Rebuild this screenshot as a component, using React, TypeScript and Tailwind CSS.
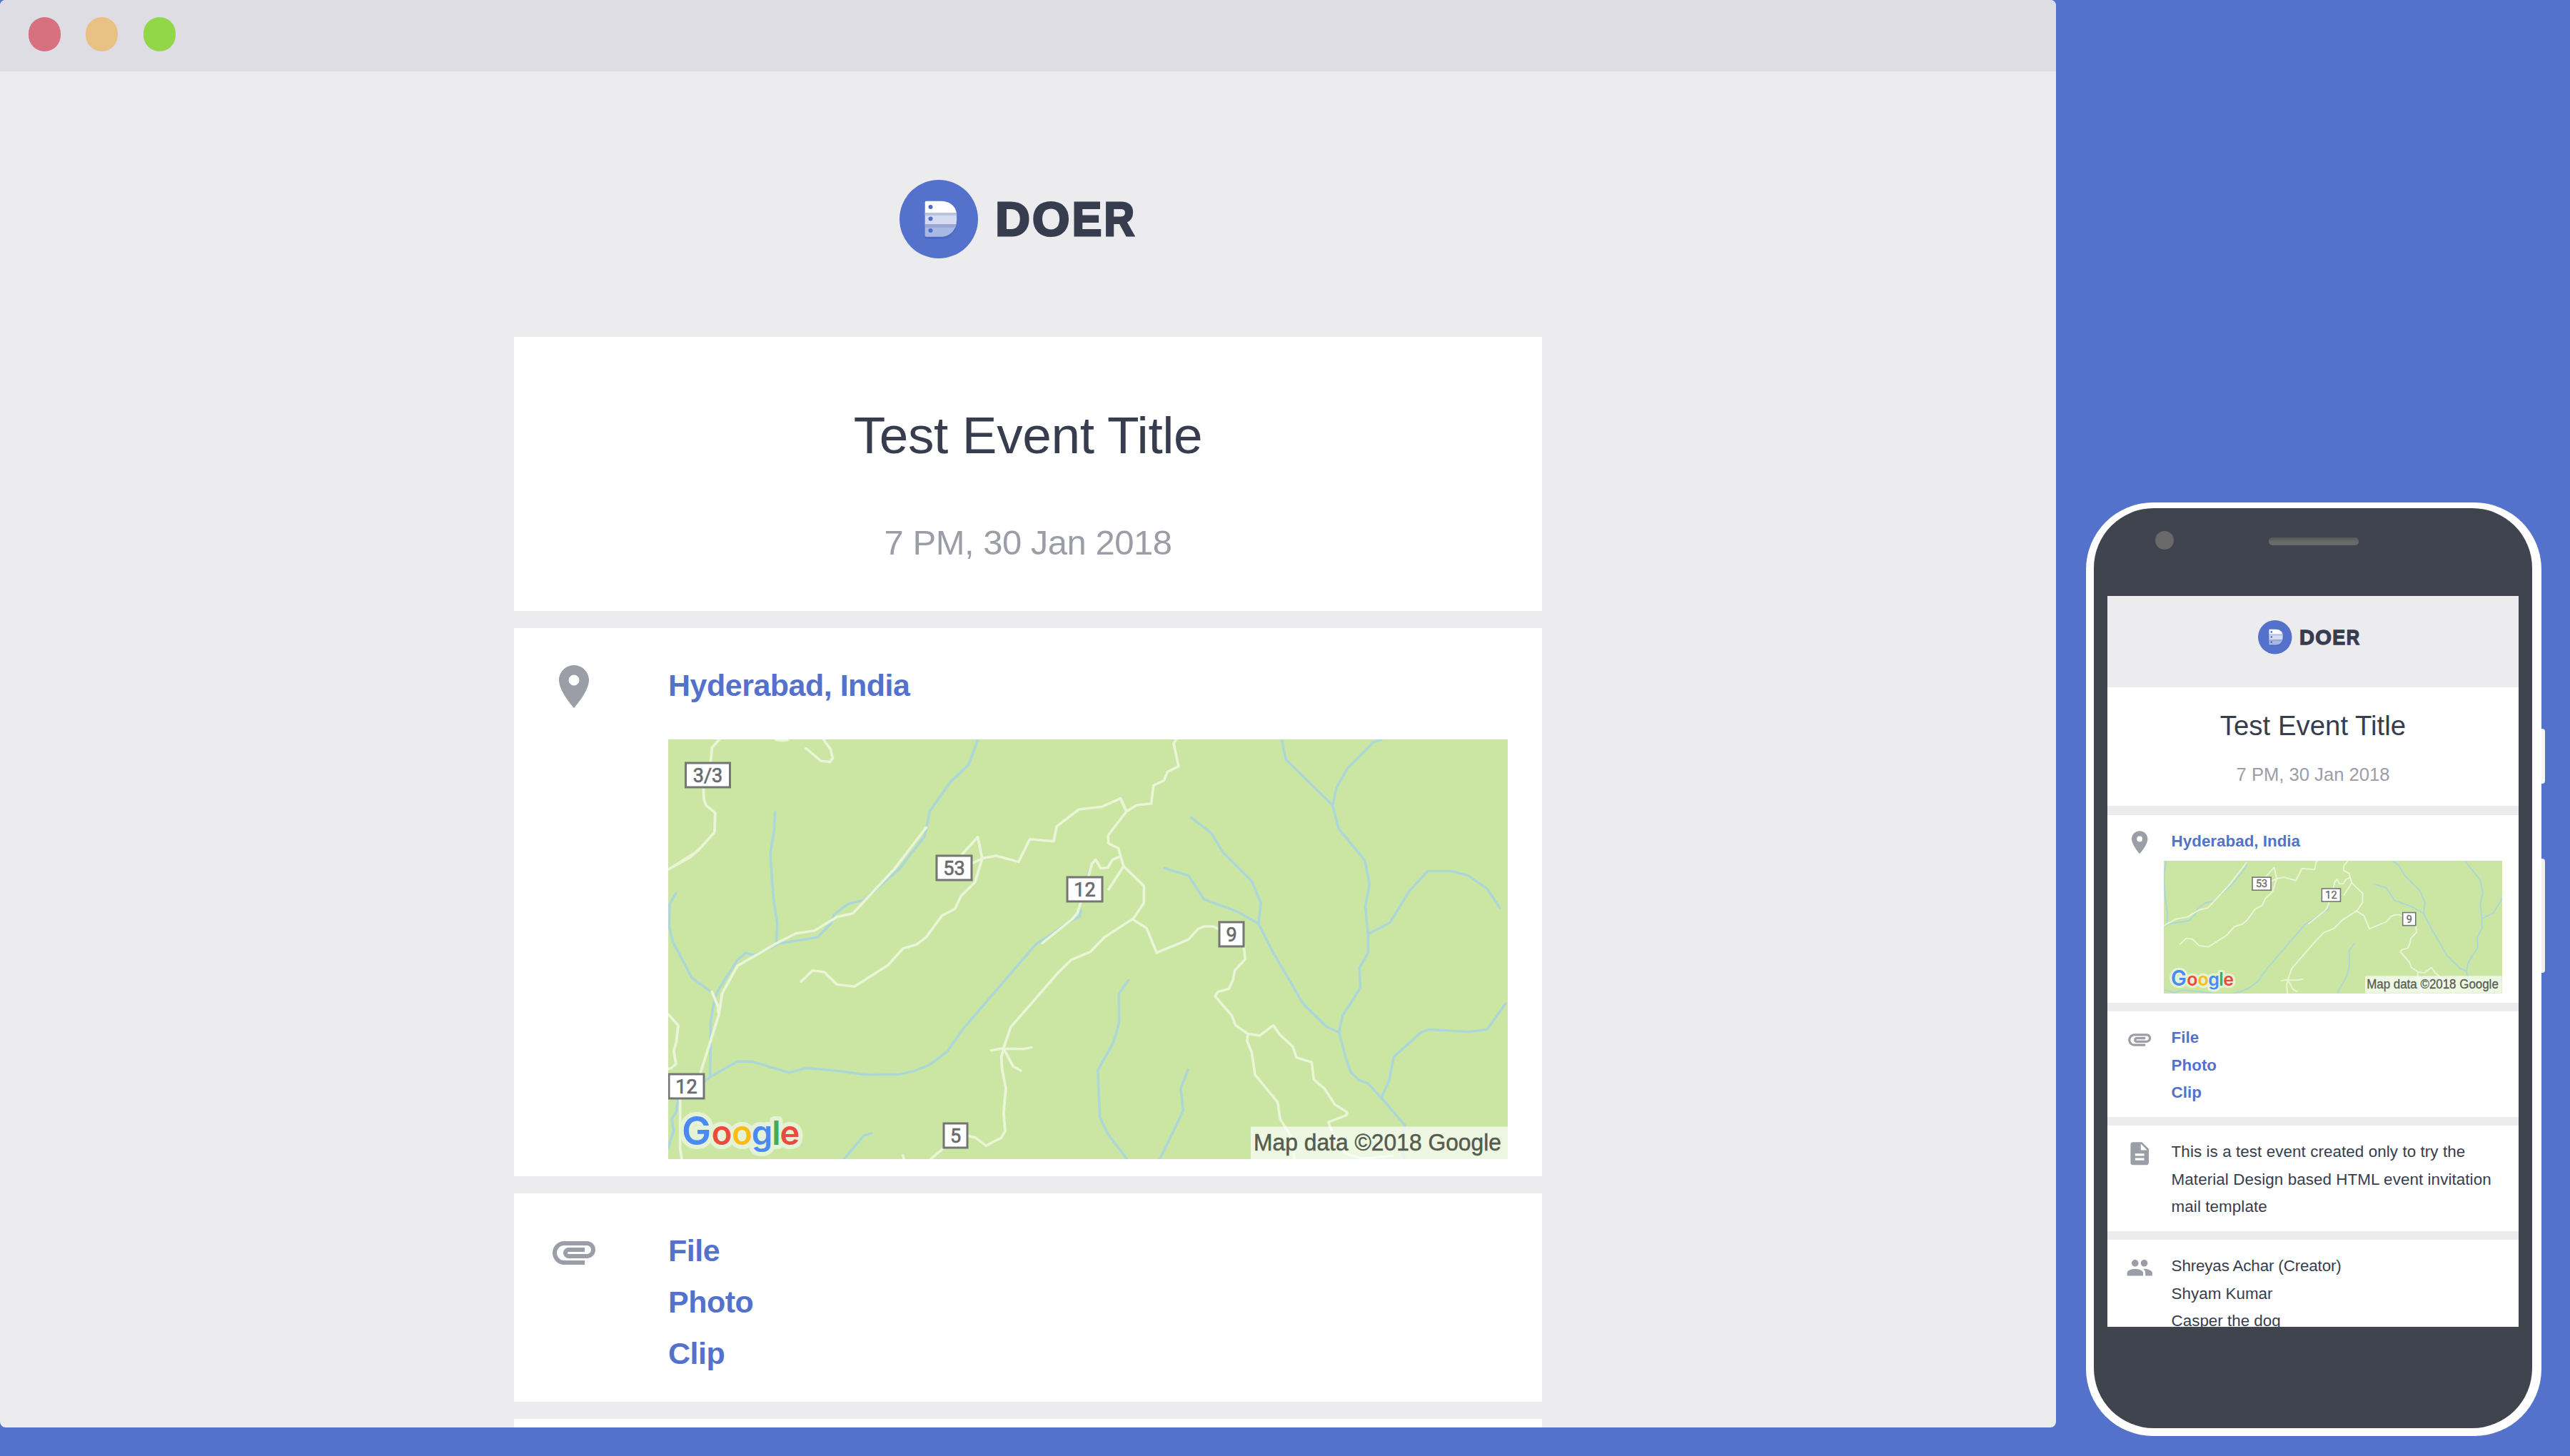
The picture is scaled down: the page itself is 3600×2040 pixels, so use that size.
import React from "react";
import { MdPlace, MdAttachment, MdDescription, MdPeople } from "react-icons/md";

/* Area map: roads, streams, road shields and the provider overlays. */
const streamsWest = [
  "M1052 87L1045 110L1023 172L965 232L902 328L885 415L805 525L695 630L645 643L600 680L592 708L550 755L510 763L430 776L350 816L325 808L298 832L240 930L228 955L214 1040L212 1228L195 1242",
  "M416 332L413 395L401 475L407 570L413 640L423 710L420 770",
  "M105 607L85 643L83 715L95 770L155 893L215 940",
  "M212 1228L298 1175L345 1176L460 1213L515 1197L620 1208L700 1220L805 1219L850 1208L900 1187L955 1143L1010 1060L1235 778L1265 758L1340 703L1372 685L1376 665",
  "M112 1302L106 1345L92 1370L98 1408L81 1465",
  "M633 1504L695 1425L718 1418",
  "M1397 548L1402 530",
];
const roadsWest = [
  "M241 87L218 115L214 166M191 252L193 290L200 310L228 335L226 400L185 450L150 485L82 526M185 450L172 465L125 497L82 526",
  "M568 87L590 120L597 150L588 163L560 160L513 117",
  "M418 87Q438 95 457 87",
  "M890 385L790 525L695 635L660 675L610 687L540 733L480 743L420 776L298 852L250 945L240 1015L214 1105L182 1213M218 940L237 990L238 1010",
  "M498 905L533 868L570 873L610 915L665 922L770 850L818 793L860 780L890 755L940 682L980 660L1000 615L1043 570L1066 490L1052 417L1003 475M1035 505L1070 488L1110 480L1180 501L1215 424L1290 431L1300 380L1370 323L1440 315L1500 286L1518 330",
  "M81 1016L112 1053L106 1110L98 1140L105 1183L90 1198L81 1200",
  "M118 1302L118 1470L123 1504",
  "M1376 635L1365 672L1350 693L1255 775",
  "M1400 548L1410 507L1422 493L1438 523L1460 520L1475 493L1500 482M1510 515L1463 593",
  "M1536 695L1450 755L1405 805L1345 832L1300 880L1155 1060L1133 1130L1095 1138M1133 1132L1195 1133L1220 1128M1133 1132L1163 1192L1187 1206M1133 1132L1126 1160L1128 1200L1140 1265L1133 1350L1138 1410L1126 1433L1078 1460L1045 1433L1025 1427M943 1470L905 1504M817 1493L820 1504",
];
const streamsEast = [
  "M186 901L155 947L156 1045L138 1110L87 1206L94 1365L120 1420L180 1504",
  "M379 1203L355 1267L363 1340L330 1415L288 1504",
  "M681 87L695 155L846 310M1003 87L975 98L893 186L858 250L846 310L865 388L950 497L965 578L951 650L960 745L960 808L932 860L935 927L878 1020L866 1077",
  "M388 350L455 405L490 467L585 567L614 640L606 712M302 522L380 547L430 627L540 670L606 710L650 800L750 980L825 1057L866 1077L890 1170L905 1212L930 1238L960 1250L1003 1298L1078 1390L1070 1475L1078 1504",
  "M960 745L1030 707L1095 597L1153 532L1230 532L1285 548L1345 592L1386 657",
  "M1003 1298L1028 1240L1043 1160L1130 1078L1155 1067L1285 1075L1345 1067L1404 980",
];
const roadsEast = [
  "M340 87L332 100L348 178L312 196L301 226L267 242L260 304L212 309L180 330L121 410L121 438L154 455L160 480L170 515L236 582L236 640L200 695M160 286L180 330",
  "M200 695L245 725L277 808L380 763L410 728L430 719L460 719L478 728M559 787L563 830L529 868L524 900L510 930L475 940L466 955L520 1020L532 1053L572 1082L610 1088L654 1053L675 1085L717 1125L729 1162L778 1178L785 1237L820 1268L852 1320L893 1347L890 1357L832 1380L840 1405L885 1485L940 1504L1040 1494",
  "M572 1082L569 1106L584 1143L595 1220L668 1313L676 1370L715 1435L722 1504",
];

const shields = [
  { x: 24.5, y: 33, w: 62, label: "3/3" },
  { x: 376, y: 163, w: 49, label: "53" },
  { x: 559, y: 193, w: 49, label: "12" },
  { x: 1, y: 469, w: 49, label: "12" },
  { x: 386, y: 538, w: 33, label: "5" },
  { x: 772, y: 256, w: 34, label: "9" },
];

const wordmark = [
  { c: "G", x: 39.5, size: 55, fill: "#4a8af4" },
  { c: "o", x: 75, size: 47, fill: "#ea4b3c" },
  { c: "o", x: 103.5, size: 47, fill: "#fbbc16" },
  { c: "g", x: 131.5, size: 47, fill: "#4a8af4" },
  { c: "l", x: 151.5, size: 47, fill: "#3fae5b" },
  { c: "e", x: 170.5, size: 47, fill: "#ea4b3c" },
];

function AreaMap({ x, y, w, h, className }: { x: number; y: number; w: number; h: number; className: string }) {
  return (
    <svg viewBox={`${x} ${y} ${w} ${h}`} preserveAspectRatio="none" className={className}>
      <rect width="1176" height="588" fill="#cae6a2" />
      <g fill="none" strokeLinejoin="round" strokeLinecap="round" strokeWidth="8.4">
        <g transform="translate(-36 -36) scale(.44643 .41454)">
          <g stroke="#add7d6">{streamsWest.map((d) => <path key={d} d={d} />)}</g>
          <g stroke="#eaf5d8">{roadsWest.map((d) => <path key={d} d={d} />)}</g>
        </g>
        <g transform="translate(564 -36) scale(.43367 .41454)">
          <g stroke="#add7d6">{streamsEast.map((d) => <path key={d} d={d} />)}</g>
          <g stroke="#eaf5d8">{roadsEast.map((d) => <path key={d} d={d} />)}</g>
        </g>
      </g>
      {shields.map((s) => (
        <g key={s.label + s.x}>
          <rect x={s.x} y={s.y} width={s.w} height="34" fill="#fff" stroke="#757575" strokeWidth="3" />
          <text x={s.x + s.w / 2} y={s.y + 26.5} textAnchor="middle" fontSize="27" fill="#6b6b6b" stroke="#6b6b6b" strokeWidth=".7" fontFamily="Roboto, sans-serif">
            {s.label}
          </text>
        </g>
      ))}
      <g transform={`translate(${x} ${y + h - 588})`} fontFamily="Inter, sans-serif" fontWeight="600" textAnchor="middle">
        <g stroke="#e6f2d6" strokeWidth="12" strokeLinejoin="round">
          {wordmark.map((l) => <text key={l.x} x={l.x} y="568" fontSize={l.size} aria-hidden="true">{l.c}</text>)}
        </g>
        {wordmark.map((l) => <text key={l.x} x={l.x} y="568" fontSize={l.size} fill={l.fill}>{l.c}</text>)}
      </g>
      <g transform={`translate(${x + w - 1176} ${y + h - 588})`}>
        <rect x="816" y="542.5" width="360" height="45.5" fill="#fff" fillOpacity=".68" />
        <text x="820" y="575.5" textLength="347" lengthAdjust="spacingAndGlyphs" fontSize="33" fill="#555b50" stroke="#555b50" strokeWidth=".5" fontFamily="Liberation Sans, sans-serif">
          Map data ©2018 Google
        </text>
      </g>
    </svg>
  );
}

const brand = [
  { c: "D", x: 134.3, w: 48.6 },
  { c: "O", x: 186.1, w: 52.4 },
  { c: "E", x: 241.7, w: 41.5 },
  { c: "R", x: 286.5, w: 42.6 },
];

function Logo({ className }: { className: string }) {
  return (
    <svg viewBox="0 0 332 110" className={className} role="img" aria-label="DOER">
      <circle cx="55" cy="55" r="55" fill="#5472cc" />
      <path d="M36 31H60C72 31 80.500 42 80.500 55C80.500 70 71 81 58 81H36Z" fill="#4260b4" opacity=".55" transform="translate(0 2)" />
      <path d="M37.500 29.700H58C70 29.700 78 36 79.800 46H35.700V31.500Q35.700 29.700 37.500 29.700Z" fill="#fff" />
      <path d="M35.700 46H79.800Q80.800 55 79.500 62.500H35.700Z" fill="#d5dbf2" />
      <path d="M35.700 46H79.800L80.200 50H35.700Z" fill="#b9c3dd" />
      <path d="M35.700 62.500H79.500C77 73 69 79.700 58 79.700H37.500Q35.700 79.700 35.700 78Z" fill="#a9b7e3" />
      <path d="M35.700 62.500H79.500L78.500 66.500H35.700Z" fill="#97a5d0" />
      <circle cx="43.500" cy="38" r="3" fill="#4f6cc4" />
      <circle cx="43.500" cy="54.500" r="3" fill="#4f6cc4" />
      <circle cx="43.500" cy="71" r="3" fill="#4f6cc4" />
      <g fontSize="67" fontWeight="700" fill="#373d4e" stroke="#373d4e" strokeWidth="3" fontFamily="Liberation Sans, sans-serif">
        {brand.map((l) => (
          <text key={l.c} x={l.x} y="78" textLength={l.w} lengthAdjust="spacingAndGlyphs">{l.c}</text>
        ))}
      </g>
    </svg>
  );
}

function DesktopMail() {
  return (
    <main className="flex h-[2000px] w-[2880px] shrink-0 flex-col overflow-hidden rounded-lg bg-[#ececee]">
      <div className="flex h-[100px] shrink-0 items-start gap-[35.500px] bg-[#dedde3] pt-6 pl-[39.500px]">
        <span className="h-12 w-[45px] rounded-full bg-[#d77080]" />
        <span className="h-12 w-[45px] rounded-full bg-[#e9c184]" />
        <span className="h-12 w-[45px] rounded-full bg-[#91d747]" />
      </div>
      <div className="mx-auto flex w-[1440px] flex-col gap-6">
        <header className="flex h-[348px] flex-col pt-[152px] pl-[540px]">
          <Logo className="h-[110px] w-[332px]" />
        </header>
        <section className="flex h-[384px] flex-col items-center gap-[78px] bg-white pt-[102px]">
          <h1 className="text-[73px] leading-[72px] tracking-[-0.400px] text-[#373d4e]">Test Event Title</h1>
          <p className="text-[49px] leading-[72px] tracking-[-0.500px] text-[#9b9ea7]">7 PM, 30 Jan 2018</p>
        </section>
        <section className="flex h-[768px] gap-24 bg-white pt-11 pl-12">
          <MdPlace className="mt-0.5 size-[72px] shrink-0 text-[#9b9ea7]" />
          <div>
            <a className="block text-[43px] leading-[72px] font-bold tracking-[-0.500px] text-[#5472cc]">Hyderabad, India</a>
            <AreaMap x={0} y={0} w={1176} h={588} className="mt-10 h-[588px] w-[1176px]" />
          </div>
        </section>
        <section className="flex h-[292px] gap-24 bg-white pt-11 pl-12">
          <MdAttachment className="mt-0.5 size-[72px] shrink-0 text-[#9b9ea7]" />
          <div className="text-[43px] leading-[72px] font-bold tracking-[-0.500px] text-[#5472cc]">
            <a className="block">File</a>
            <a className="block">Photo</a>
            <a className="block">Clip</a>
          </div>
        </section>
        <section className="h-24 bg-white" />
      </div>
    </main>
  );
}

function PhoneRow({ icon, className, children }: { icon: React.ReactNode; className: string; children: React.ReactNode }) {
  return (
    <section className={`flex shrink-0 bg-white pl-[25.600px] ${className}`}>
      <div className="w-[64px] shrink-0 pt-[19.200px] text-[#9b9ea7]">{icon}</div>
      <div className="pt-[18px] text-[22.400px] leading-[38.400px] whitespace-nowrap text-[#373d4e]">{children}</div>
    </section>
  );
}

function Phone() {
  const icon = "size-[38.400px]";
  return (
    <aside className="relative mt-[704px] ml-[42px] h-[1308px] w-[638px] shrink-0 rounded-[94px] bg-white pt-2 pl-[11px]">
      <span className="absolute top-[317px] left-[638px] h-[77px] w-[5px] rounded-r bg-[#f6f6f7]" />
      <span className="absolute top-[499px] left-[638px] h-[160px] w-[5px] rounded-r bg-[#f0f0f1]" />
      <div className="flex h-[1289px] w-[614px] flex-col rounded-[84px] bg-[#40444f] px-[19px]">
        <div className="flex h-[123px] shrink-0 items-start pl-[67px]">
          <span className="mt-[32px] size-[26px] rounded-full bg-[#696969]" />
          <span className="mt-[41px] ml-[133px] h-[11px] w-[126px] rounded-[5px] bg-linear-to-b from-[#565656] to-[#6a6a6a] to-60%" />
        </div>
        <div className="flex h-[1024px] w-[576px] shrink-0 flex-col gap-[12.800px] overflow-hidden bg-[#ececee]">
          <div className="flex shrink-0 flex-col">
            <header className="h-[128px] pt-[34px] pl-[211px]">
              <Logo className="h-[47.500px] w-[143.400px]" />
            </header>
            <section className="flex h-[166.400px] flex-col items-center gap-[30px] bg-white pt-[35px]">
              <h2 className="text-[38.400px] leading-none text-[#373d4e]">Test Event Title</h2>
              <p className="text-[25.600px] leading-[38.400px] text-[#9b9ea7]">7 PM, 30 Jan 2018</p>
            </section>
          </div>
          <PhoneRow className="h-[262.400px]" icon={<MdPlace className={icon} />}>
            <a className="block font-bold text-[#5472cc]">Hyderabad, India</a>
            <AreaMap x={143} y={119.5} w={890} h={349} className="mt-[7.400px] -ml-[10.400px] h-[185.600px] w-[473.600px]" />
          </PhoneRow>
          <PhoneRow className="h-[147.200px]" icon={<MdAttachment className={icon} />}>
            <div className="font-bold text-[#5472cc]">
              <a className="block">File</a>
              <a className="block">Photo</a>
              <a className="block">Clip</a>
            </div>
          </PhoneRow>
          <PhoneRow className="h-[147.200px]" icon={<MdDescription className={icon} />}>
            <div className="tracking-[0.080px]">
              <p>This is a test event created only to try the</p>
              <p>Material Design based HTML event invitation</p>
              <p>mail template</p>
            </div>
          </PhoneRow>
          <PhoneRow className="h-[147.200px]" icon={<MdPeople className={icon} />}>
            <p className="tracking-[-0.150px]">Shreyas Achar (Creator)</p>
            <p>Shyam Kumar</p>
            <p>Casper the dog</p>
          </PhoneRow>
        </div>
      </div>
    </aside>
  );
}

export default function App() {
  return (
    <div className="flex h-[2040px] w-[3600px] items-start overflow-hidden bg-[#5472cc] font-['Liberation_Sans',sans-serif]">
      <DesktopMail />
      <Phone />
    </div>
  );
}
